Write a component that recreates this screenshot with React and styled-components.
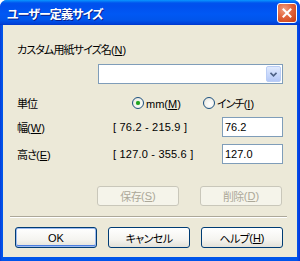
import React from 'react';
import styled, { createGlobalStyle } from 'styled-components';

const GlobalStyle = createGlobalStyle`
  html, body {
    margin: 0;
    padding: 0;
    background: #ffffff;
  }
  body {
    font-family: "Liberation Sans", "Noto Sans CJK JP", sans-serif;
    font-size: 11px;
    color: #000;
  }
`;

const Window = styled.div`
  width: 300px;
  height: 261px;
  box-sizing: border-box;
  display: flex;
  flex-direction: column;
  border-radius: 7px 7px 0 0;
  overflow: hidden;
  background: linear-gradient(to right, #0a3bd8 0, #0055ea 2px, #0055ea 297px, #0831d9 300px);
`;

const TitleBar = styled.div`
  height: 25px;
  flex: none;
  display: flex;
  align-items: center;
  justify-content: space-between;
  padding: 0 3px 0 7px;
  background: linear-gradient(
    to bottom,
    #0997ff 0px,
    #0053ee 3px,
    #0050ee 6px,
    #0058f4 14px,
    #0055eb 20px,
    #0040d8 24px,
    #0036c8 25px
  );
`;

const Title = styled.span`
  color: #fff;
  font-family: "Noto Sans CJK JP", sans-serif;
  font-feature-settings: "palt";
  font-weight: 700;
  font-size: 12px;
  letter-spacing: -0.9px;
  text-shadow: 1px 1px 0 #0a1e8a;
  margin-top: 1px;
`;

const CloseButton = styled.div`
  width: 20px;
  height: 20px;
  box-sizing: border-box;
  border: 1px solid #fff;
  border-radius: 3px;
  background: radial-gradient(circle at 35% 30%, #f0a083 0, #e2643c 45%, #c63c12 100%);
  display: flex;
  align-items: center;
  justify-content: center;
  margin-top: 1px;
`;

const Client = styled.div`
  flex: 1;
  margin: 0 3px 4px;
  background: #ece9d8;
  display: flex;
  flex-direction: column;
  padding: 17px 14px 0 14px;
`;

const Label = styled.span`
  font-family: "Noto Sans CJK JP", sans-serif;
  font-feature-settings: "palt";
  font-size: 11px;
  line-height: 14px;
  letter-spacing: -0.9px;
  white-space: nowrap;
  color: ${({ $disabled }) => ($disabled ? '#aca899' : '#000')};
`;

const Key = styled.span`
  text-decoration: underline;
  font-family: "Liberation Sans", sans-serif;
  letter-spacing: 0;
`;

const Paren = styled.span`
  font-family: "Liberation Sans", sans-serif;
  letter-spacing: 0;
`;

const ComboRow = styled.div`
  display: flex;
  justify-content: flex-end;
  margin-top: 7px;
`;

const Combo = styled.div`
  width: 185px;
  height: 20px;
  box-sizing: border-box;
  border: 1px solid #7f9db9;
  background: #fff;
  display: flex;
  justify-content: flex-end;
  align-items: center;
  padding-right: 1px;
`;

const ComboButton = styled.div`
  width: 15px;
  height: 16px;
  box-sizing: border-box;
  border: 1px solid #bacdf5;
  border-radius: 2px;
  background: linear-gradient(to bottom, #e0eafd 0, #c6d6fb 60%, #b5c8f7 100%);
  display: flex;
  align-items: center;
  justify-content: center;
`;

const UnitRow = styled.div`
  display: flex;
  align-items: center;
  margin-top: 12px;
  height: 14px;
`;

const UnitLabel = styled(Label)`
  width: 115px;
`;

const RadioItem = styled.div`
  display: flex;
  align-items: center;
  gap: 2px;
  margin-right: ${({ $gap }) => $gap || 0}px;
`;

const RadioCircle = styled.span`
  width: 12px;
  height: 12px;
  box-sizing: border-box;
  border-radius: 50%;
  border: 1px solid #1c5180;
  background: radial-gradient(circle at 60% 60%, #ffffff 0, #f4f3ee 50%, #dcdad0 100%);
  display: flex;
  align-items: center;
  justify-content: center;
  &::after {
    content: '';
    display: ${({ $checked }) => ($checked ? 'block' : 'none')};
    width: 4px;
    height: 4px;
    border-radius: 50%;
    background: #21a121;
    box-shadow: 0 0 1px #55d355;
  }
`;

const SizeGrid = styled.div`
  display: grid;
  grid-template-columns: 96px 109px 61px;
  grid-auto-rows: 20px;
  row-gap: 7px;
  align-items: center;
  margin-top: 7px;
`;

const Range = styled.span`
  font-family: "Liberation Sans", sans-serif;
  font-size: 11px;
  letter-spacing: 0.2px;
  white-space: pre;
`;

const Field = styled.div`
  height: 20px;
  box-sizing: border-box;
  border: 1px solid #7f9db9;
  background: #fff;
  padding: 2px 0 0 2px;
  font-family: "Liberation Sans", sans-serif;
  font-size: 11px;
  line-height: 14px;
`;

const ActionRow = styled.div`
  display: flex;
  gap: 21px;
  justify-content: flex-end;
  padding-right: 1px;
  margin-top: 22px;
`;

const Button = styled.div`
  width: ${({ $w }) => $w || 82}px;
  height: ${({ $h }) => $h || 21}px;
  box-sizing: border-box;
  border-radius: 3px;
  display: flex;
  align-items: center;
  justify-content: center;
  font-family: "Noto Sans CJK JP", sans-serif;
  font-feature-settings: "palt";
  font-size: 11px;
  letter-spacing: -0.6px;
  border: 1px solid ${({ $disabled }) => ($disabled ? '#c9c7ba' : '#003c74')};
  color: ${({ $disabled }) => ($disabled ? '#aca899' : '#000')};
  background: ${({ $disabled }) =>
    $disabled ? '#f5f4ea' : 'linear-gradient(to bottom, #ffffff 0, #f5f4f0 60%, #e3e1d8 100%)'};
  box-shadow: ${({ $default }) =>
    $default ? 'inset 0 0 0 1px #9dbbf0, inset 0 -1px 0 1px #4d7ede' : 'none'};
`;

const Separator = styled.div`
  height: 0;
  margin: 10px -4px 0 -7px;
  border-top: 1px solid #aca899;
  border-bottom: 1px solid #fff;
`;

const FooterRow = styled.div`
  display: flex;
  justify-content: space-between;
  margin: 9px 0 0 -2px;
`;

const Chevron = () => (
  <svg width="7" height="5" viewBox="0 0 7 5">
    <path d="M0.5 0.8 L3.5 3.8 L6.5 0.8" fill="none" stroke="#4d6185" strokeWidth="1.6" />
  </svg>
);

const CloseX = () => (
  <svg width="10" height="10" viewBox="0 0 10 10">
    <path d="M1.5 1.5 L8.5 8.5 M8.5 1.5 L1.5 8.5" stroke="#fff" strokeWidth="2" strokeLinecap="square" />
  </svg>
);

const App = () => (
  <>
    <GlobalStyle />
    <Window>
      <TitleBar>
        <Title>ユーザー定義サイズ</Title>
        <CloseButton><CloseX /></CloseButton>
      </TitleBar>
      <Client>
        <Label>カスタム用紙サイズ名<Paren>(</Paren><Key>N</Key><Paren>)</Paren></Label>
        <ComboRow>
          <Combo>
            <ComboButton><Chevron /></ComboButton>
          </Combo>
        </ComboRow>
        <UnitRow>
          <UnitLabel>単位</UnitLabel>
          <RadioItem $gap={22}>
            <RadioCircle $checked />
            <Label><Paren>mm(</Paren><Key>M</Key><Paren>)</Paren></Label>
          </RadioItem>
          <RadioItem>
            <RadioCircle />
            <Label>インチ<Paren>(</Paren><Key>I</Key><Paren>)</Paren></Label>
          </RadioItem>
        </UnitRow>
        <SizeGrid>
          <Label>幅<Paren>(</Paren><Key>W</Key><Paren>)</Paren></Label>
          <Range>[ 76.2 - 215.9 ]</Range>
          <Field>76.2</Field>
          <Label>高さ<Paren>(</Paren><Key>E</Key><Paren>)</Paren></Label>
          <Range>[ 127.0 - 355.6 ]</Range>
          <Field>127.0</Field>
        </SizeGrid>
        <ActionRow>
          <Button $disabled $h={20}>保存<Paren>(</Paren><Key>S</Key><Paren>)</Paren></Button>
          <Button $disabled $h={20}>削除<Paren>(</Paren><Key>D</Key><Paren>)</Paren></Button>
        </ActionRow>
        <Separator />
        <FooterRow>
          <Button $default><Paren>OK</Paren></Button>
          <Button>キャンセル</Button>
          <Button>ヘルプ<Paren>(</Paren><Key>H</Key><Paren>)</Paren></Button>
        </FooterRow>
      </Client>
    </Window>
  </>
);

export default App;
